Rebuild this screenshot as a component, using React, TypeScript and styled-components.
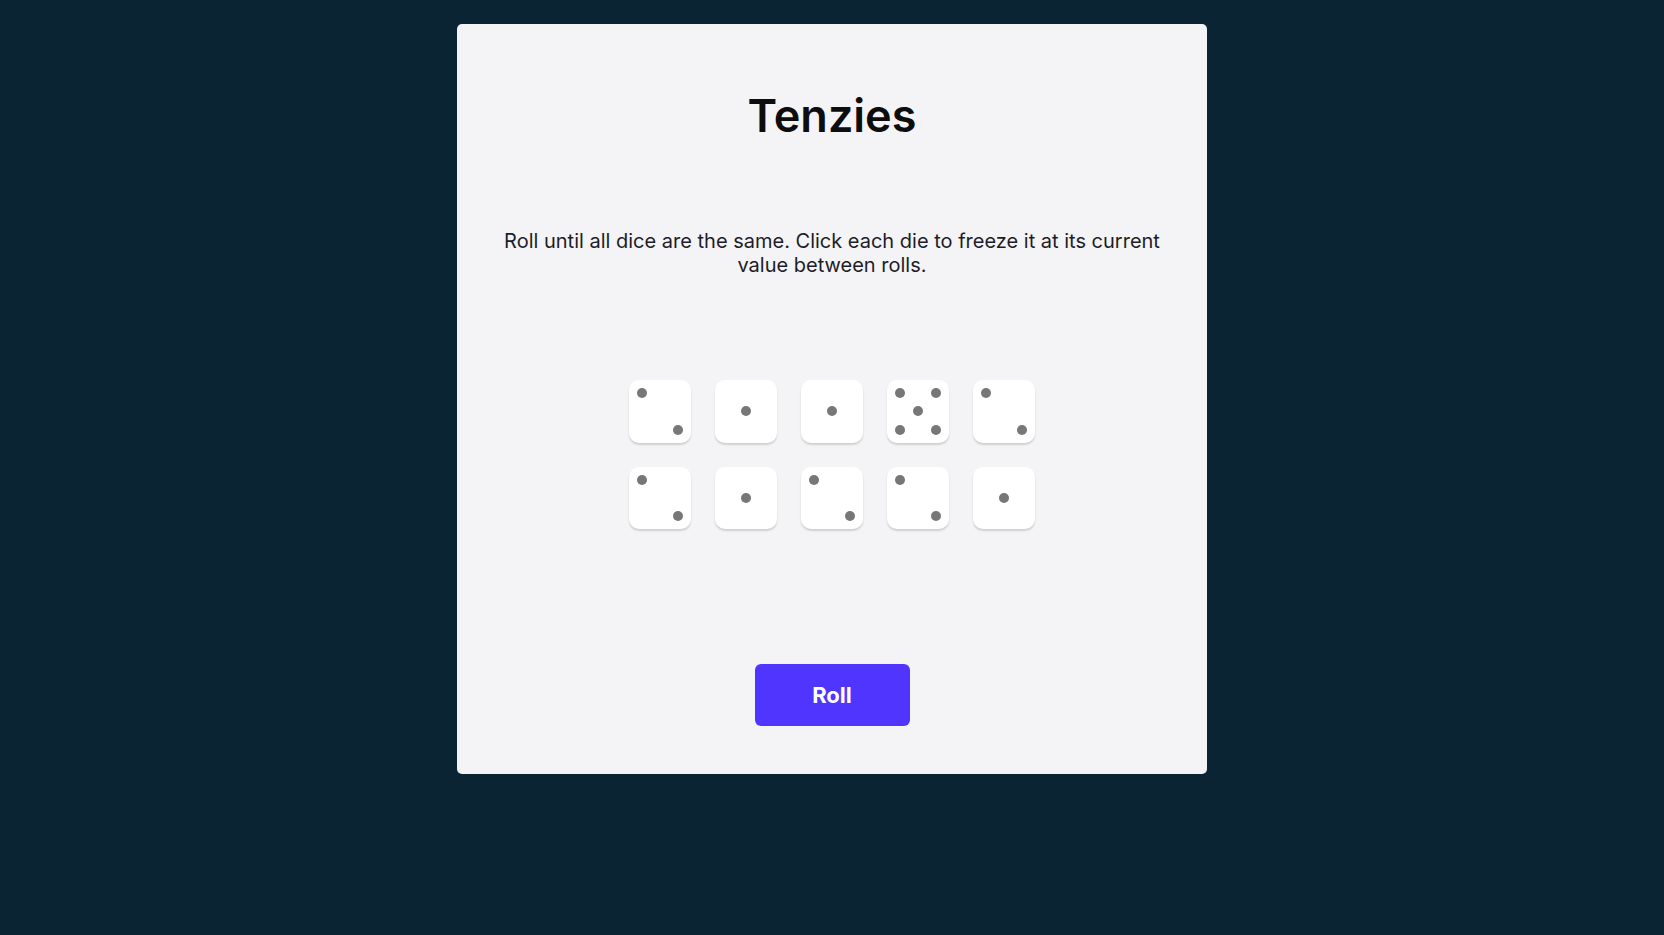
import React, { FC } from 'react';
import styled, { createGlobalStyle } from 'styled-components';

const GlobalStyle = createGlobalStyle`
  html, body {
    margin: 0;
    padding: 0;
    background: #0b2434;
    font-family: Inter, "Noto Sans", sans-serif;
  }
`;

const Page = styled.div`
  min-height: 935px;
  padding-top: 24px;
  box-sizing: border-box;
  display: flex;
  justify-content: center;
  align-items: flex-start;
`;

const Card = styled.main`
  width: 750px;
  height: 750px;
  background: #f4f4f6;
  border-radius: 5px;
  display: flex;
  flex-direction: column;
  align-items: center;
  box-sizing: border-box;
`;

const Title = styled.h1`
  margin: 66px 0 0;
  font-size: 45px;
  line-height: 52px;
  font-weight: 600;
  color: #0d0d0d;
`;

const Instructions = styled.p`
  margin: 87px 0 0;
  max-width: 670px;
  font-size: 20px;
  line-height: 24px;
  font-weight: 400;
  text-align: center;
  color: #1e1c28;
`;

const DiceGrid = styled.div`
  margin-top: 103px;
  display: grid;
  grid-template-columns: repeat(5, 62.5px);
  grid-auto-rows: 62.5px;
  column-gap: 23.5px;
  row-gap: 24px;
`;

const Die = styled.button`
  width: 62.5px;
  height: 62.5px;
  padding: 8px;
  box-sizing: border-box;
  border: none;
  border-radius: 10px;
  background: #ffffff;
  box-shadow: 0 2px 2px rgba(0, 0, 0, 0.15);
  display: grid;
  grid-template-columns: repeat(3, 10px);
  grid-template-rows: repeat(3, 10px);
  justify-content: space-between;
  align-content: space-between;
  cursor: pointer;
`;

const Pip = styled.span<{ row: number; col: number }>`
  grid-row: ${({ row }) => row};
  grid-column: ${({ col }) => col};
  width: 10px;
  height: 10px;
  border-radius: 50%;
  background: #777777;
`;

const RollButton = styled.button`
  margin-top: 135px;
  width: 155px;
  height: 62px;
  border: none;
  border-radius: 6px;
  background: #5035ff;
  color: #ffffff;
  font-family: Inter, "Noto Sans", sans-serif;
  font-size: 22px;
  font-weight: 700;
  cursor: pointer;
`;

const pipLayouts: Record<number, [number, number][]> = {
  1: [[2, 2]],
  2: [[1, 1], [3, 3]],
  3: [[1, 1], [2, 2], [3, 3]],
  4: [[1, 1], [1, 3], [3, 1], [3, 3]],
  5: [[1, 1], [1, 3], [2, 2], [3, 1], [3, 3]],
  6: [[1, 1], [1, 3], [2, 1], [2, 3], [3, 1], [3, 3]],
};

const dice = [2, 1, 1, 5, 2, 2, 1, 2, 2, 1];

const DieFace: FC<{ value: number }> = ({ value }) => (
  <Die aria-label={`Die showing ${value}`}>
    {pipLayouts[value].map(([row, col], i) => (
      <Pip key={i} row={row} col={col} />
    ))}
  </Die>
);

const App: FC = () => (
  <>
    <GlobalStyle />
    <Page>
      <Card>
        <Title>Tenzies</Title>
        <Instructions>
          Roll until all dice are the same. Click each die to freeze it at its current value
          between rolls.
        </Instructions>
        <DiceGrid>
          {dice.map((value, i) => (
            <DieFace key={i} value={value} />
          ))}
        </DiceGrid>
        <RollButton>Roll</RollButton>
      </Card>
    </Page>
  </>
);

export default App;
